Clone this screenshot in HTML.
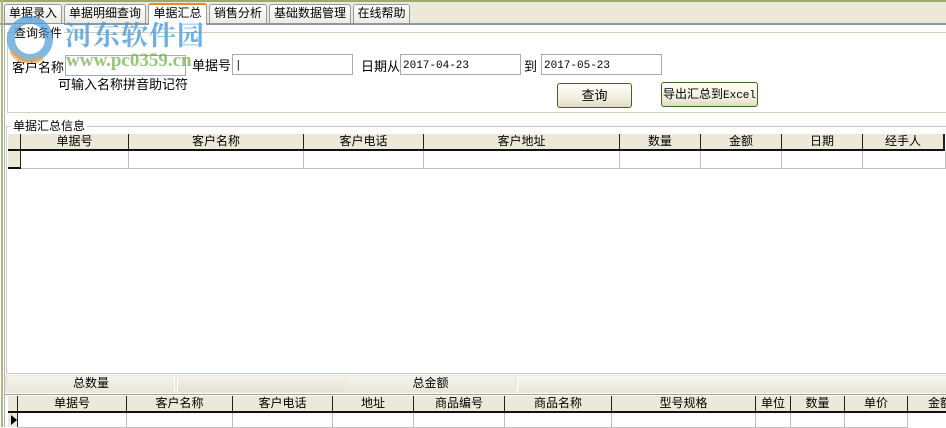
<!DOCTYPE html>
<html><head><meta charset="utf-8"><style>
*{margin:0;padding:0;box-sizing:border-box}
body{width:946px;height:427px;overflow:hidden;background:#fff;font-family:"Liberation Sans","Noto Sans CJK SC","WenQuanYi Zen Hei",sans-serif;font-size:12px;color:#000;position:relative}
.a{position:absolute;white-space:nowrap}
.tab{position:absolute;top:4px;height:19px;border:1px solid #919b9c;border-bottom:none;background:linear-gradient(#fff,#ecebe5);font-size:12px;line-height:17px;text-align:center;border-radius:3px 3px 0 0}
.inp{position:absolute;height:21px;border:1px solid #a5acb2;background:#fff;font-family:"Liberation Mono","Noto Sans CJK SC",monospace;font-size:11px;line-height:20px;padding-left:2px;padding-top:1px}
.btn{position:absolute;border:1px solid #3b6a16;border-radius:3px;background:linear-gradient(#fffff8,#f0ecdc 70%,#e0dac4);text-align:center;font-size:13px}
.hdr{position:absolute;height:17px;background:#ece9d8;border-right:2px solid #222;border-bottom:2px solid #111;text-align:center;line-height:15px;font-size:12px}
.cell{position:absolute;border-right:1px solid #c0c0c0;border-bottom:1px solid #c0c0c0;background:#fff}
.wm{z-index:5}
</style></head><body>
<div class="a" style="left:0;top:0;width:946px;height:24px;background:#ece9d8"></div>
<div class="a" style="left:0;top:0;width:946px;height:2px;background:#9caa70"></div>
<div class="a" style="left:0;top:23px;width:946px;height:2px;background:#8c99a0"></div>
<div class="a" style="left:1px;top:0;width:2px;height:427px;background:#a9b884"></div>
<div class="a" style="left:4px;top:25px;width:1px;height:402px;background:#b0b0b0"></div>

<div class="tab" style="left:4px;width:58px">单据录入</div>
<div class="tab" style="left:64px;width:82px">单据明细查询</div>
<div class="tab" style="left:148px;width:59px;top:3px;height:22px;background:#fcfcfe;border-top:2px solid #e68b2c;z-index:2">单据汇总</div>
<div class="tab" style="left:209px;width:58px">销售分析</div>
<div class="tab" style="left:269px;width:82px">基础数据管理</div>
<div class="tab" style="left:353px;width:57px">在线帮助</div>

<!-- group 1 -->
<div class="a" style="left:7px;top:32px;width:940px;height:81px;border:1px solid #d0d0bf;border-right:none"></div>
<div class="a" style="left:12px;top:24px;background:#fff;padding:0 2px;font-size:12px">查询条件</div>

<div class="a" style="left:12px;top:57px;font-size:13px">客户名称</div>
<div class="inp" style="left:65px;top:55px;width:121px"></div>
<div class="a" style="left:192px;top:55px;font-size:13px">单据号</div>
<div class="inp" style="left:232px;top:54px;width:121px">|</div>
<div class="a" style="left:361px;top:56px;font-size:13px">日期从</div>
<div class="inp" style="left:400px;top:54px;width:121px">2017-04-23</div>
<div class="a" style="left:524px;top:56px;font-size:13px">到</div>
<div class="inp" style="left:541px;top:54px;width:121px">2017-05-23</div>
<div class="a" style="left:58px;top:74px;font-size:13px">可输入名称拼音助记符</div>
<div class="btn" style="left:557px;top:83px;width:75px;height:25px;line-height:23px">查询</div>
<div class="btn" style="left:661px;top:82px;width:97px;height:25px;line-height:23px;font-size:12px">导出汇总到<span style="font-family:'Liberation Mono',monospace;font-size:11px">Excel</span></div>

<!-- watermark -->
<svg class="a wm" style="left:2px;top:15px" width="60" height="48"><circle cx="28" cy="24" r="19" fill="none" stroke="#4a9ad8" stroke-width="8" opacity=".7"/><path d="M10 36 A20 20 0 0 0 40 42" fill="none" stroke="#f0a040" stroke-width="6" opacity=".6"/></svg>
<div class="a wm" style="left:65px;top:14px;font-size:27px;font-weight:bold;color:#4b9cdc;opacity:.8;font-family:'Noto Serif CJK SC',serif;letter-spacing:1px">河东软件园</div>
<div class="a wm" style="left:66px;top:50px;font-size:19px;font-weight:bold;color:#6aae3e;opacity:.7;font-family:'Liberation Serif',serif">www.pc0359.cn</div>

<!-- group 2 -->
<div class="a" style="left:6px;top:126px;width:941px;height:248px;border:1px solid #c8c8c8;border-right:none"></div>
<div class="a" style="left:11px;top:117px;background:#fff;padding:0 2px;font-size:12px">单据汇总信息</div>

<div class="hdr" style="left:8px;top:134px;width:14px"></div>
<div class="hdr" style="left:21px;top:134px;width:109px">单据号</div>
<div class="hdr" style="left:129px;top:134px;width:176px">客户名称</div>
<div class="hdr" style="left:304px;top:134px;width:121px">客户电话</div>
<div class="hdr" style="left:424px;top:134px;width:197px">客户地址</div>
<div class="hdr" style="left:620px;top:134px;width:82px">数量</div>
<div class="hdr" style="left:701px;top:134px;width:82px">金额</div>
<div class="hdr" style="left:782px;top:134px;width:82px">日期</div>
<div class="hdr" style="left:863px;top:134px;width:82px">经手人</div>
<div class="hdr" style="left:8px;top:151px;width:14px;height:18px"></div>
<div class="cell" style="left:21px;top:151px;width:108px;height:18px"></div>
<div class="cell" style="left:129px;top:151px;width:175px;height:18px"></div>
<div class="cell" style="left:304px;top:151px;width:120px;height:18px"></div>
<div class="cell" style="left:424px;top:151px;width:196px;height:18px"></div>
<div class="cell" style="left:620px;top:151px;width:81px;height:18px"></div>
<div class="cell" style="left:701px;top:151px;width:81px;height:18px"></div>
<div class="cell" style="left:782px;top:151px;width:81px;height:18px"></div>
<div class="cell" style="left:863px;top:151px;width:83px;height:18px"></div>

<!-- summary bar -->
<div class="a" style="left:5px;top:375px;width:941px;height:18px;background:#ece9d8"></div>
<div class="a" style="left:8px;top:376px;width:167px;height:16px;background:linear-gradient(#f4f3ec,#e8e6d8);border-right:1px solid #fff;text-align:center;font-size:12px;line-height:15px">总数量</div>
<div class="a" style="left:177px;top:376px;width:168px;height:16px;background:linear-gradient(#f4f3ec,#e6e3d4);border-left:1px solid #fff"></div>
<div class="a" style="left:346px;top:376px;width:169px;height:16px;background:linear-gradient(#f4f3ec,#e8e6d8);text-align:center;line-height:15px">总金额</div>
<div class="a" style="left:517px;top:376px;width:429px;height:16px;background:linear-gradient(#f8f8f4,#e8e6d8);border-left:1px solid #fff"></div>
<div class="a" style="left:5px;top:394px;width:941px;height:1px;background:#a0a0a0"></div>

<!-- bottom grid -->
<div class="hdr" style="left:8px;top:396px;width:11px"></div>
<div class="hdr" style="left:18px;top:396px;width:110px">单据号</div>
<div class="hdr" style="left:127px;top:396px;width:107px">客户名称</div>
<div class="hdr" style="left:233px;top:396px;width:101px">客户电话</div>
<div class="hdr" style="left:333px;top:396px;width:82px">地址</div>
<div class="hdr" style="left:414px;top:396px;width:92px">商品编号</div>
<div class="hdr" style="left:505px;top:396px;width:108px">商品名称</div>
<div class="hdr" style="left:612px;top:396px;width:145px">型号规格</div>
<div class="hdr" style="left:756px;top:396px;width:36px">单位</div>
<div class="hdr" style="left:791px;top:396px;width:55px">数量</div>
<div class="hdr" style="left:845px;top:396px;width:64px">单价</div>
<div class="hdr" style="left:908px;top:396px;width:60px;text-align:left;padding-left:20px">金额</div>
<div class="a" style="left:8px;top:413px;width:11px;height:14px;background:#ece9d8;border-right:2px solid #222"></div>
<div class="a" style="left:11px;top:415px;width:0;height:0;border-left:6px solid #000;border-top:5px solid transparent;border-bottom:5px solid transparent"></div>
<div class="cell" style="left:18px;top:413px;width:109px;height:15px"></div>
<div class="cell" style="left:127px;top:413px;width:106px;height:15px"></div>
<div class="cell" style="left:233px;top:413px;width:100px;height:15px"></div>
<div class="cell" style="left:333px;top:413px;width:81px;height:15px"></div>
<div class="cell" style="left:414px;top:413px;width:91px;height:15px"></div>
<div class="cell" style="left:505px;top:413px;width:107px;height:15px"></div>
<div class="cell" style="left:612px;top:413px;width:144px;height:15px"></div>
<div class="cell" style="left:756px;top:413px;width:35px;height:15px"></div>
<div class="cell" style="left:791px;top:413px;width:54px;height:15px"></div>
<div class="cell" style="left:845px;top:413px;width:63px;height:15px"></div>
</body></html>
